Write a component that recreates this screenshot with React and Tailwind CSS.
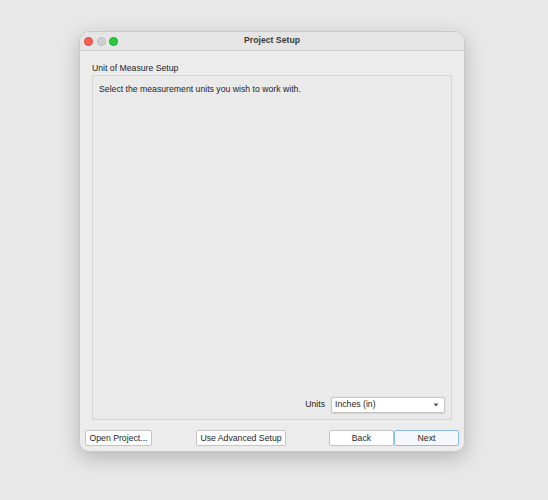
export default function App() {
  const font = { fontFamily: '"Liberation Sans", Arial, sans-serif' };
  return (
    <div className="w-[548px] h-[500px] bg-[#e8e8e8] pt-[31px] pl-[79px]" style={font}>
      <div className="w-[386px] h-[421px] bg-[#ececec] rounded-[10px] border border-[#c9c9c9] shadow-[0_6px_20px_rgba(0,0,0,0.22)] flex flex-col overflow-hidden">
        <div className="h-[19px] bg-[#e5e5e5] border-b border-[#d0d0d0] flex items-center relative shrink-0">
          <div className="flex items-center gap-[3.5px] pl-[4px]">
            <span className="w-[9px] h-[9px] rounded-full bg-[#fe5f57] border border-[#e0443e]" />
            <span className="w-[9px] h-[9px] rounded-full bg-[#cfcfcf] border border-[#bdbdbd]" />
            <span className="w-[9px] h-[9px] rounded-full bg-[#2ac940] border border-[#1aab29]" />
          </div>
          <div className="absolute inset-0 flex items-center justify-center text-[8.7px] font-bold text-[#3a3a3a]">
            Project Setup
          </div>
        </div>
        <div className="flex-1 flex flex-col px-[12px] pt-[13px] pb-[5px]">
          <div className="text-[8.7px] text-[#1e1e1e] leading-none mb-[2px]">Unit of Measure Setup</div>
          <div className="flex-1 border border-[#d4d4d4] bg-[#eaeaea] flex flex-col px-[6px] pt-[9px] pb-[6px]">
            <div className="text-[8.7px] text-[#1e1e1e] leading-none">
              Select the measurement units you wish to work with.
            </div>
            <div className="flex-1" />
            <div className="flex items-center justify-end gap-[6px]">
              <span className="text-[8.7px] text-[#1e1e1e]">Units</span>
              <div className="w-[114px] h-[16px] bg-white border border-[#c4c4c4] rounded-[2px] flex items-center justify-between pl-[3px] pr-[5px] shadow-[0_0.5px_1px_rgba(0,0,0,0.1)]">
                <span className="text-[8.7px] text-[#1e1e1e]">Inches (in)</span>
                <svg width="6" height="4" viewBox="0 0 6 4">
                  <path d="M0.5 0.5 L5.5 0.5 L3 3.5 Z" fill="#555" />
                </svg>
              </div>
            </div>
          </div>
          <div className="flex items-center mt-[10px] -mx-[7px]">
            <button className="h-[16px] bg-white border border-[#c4c4c4] rounded-[2px] text-[8.7px] text-[#1e1e1e] leading-none w-[67px] whitespace-nowrap">
              Open Project...
            </button>
            <button className="ml-[44px] h-[16px] bg-white border border-[#c4c4c4] rounded-[2px] text-[8.7px] text-[#1e1e1e] leading-none w-[90px] whitespace-nowrap">
              Use Advanced Setup
            </button>
            <div className="flex-1" />
            <button className="h-[16px] bg-white border border-[#c4c4c4] rounded-[2px] text-[8.7px] text-[#1e1e1e] leading-none w-[65px]">
              Back
            </button>
            <button className="h-[16px] bg-[#f4f8fc] border border-[#8fbbea] rounded-[2px] text-[8.7px] text-[#1e1e1e] leading-none w-[65px]">
              Next
            </button>
          </div>
        </div>
      </div>
    </div>
  );
}
